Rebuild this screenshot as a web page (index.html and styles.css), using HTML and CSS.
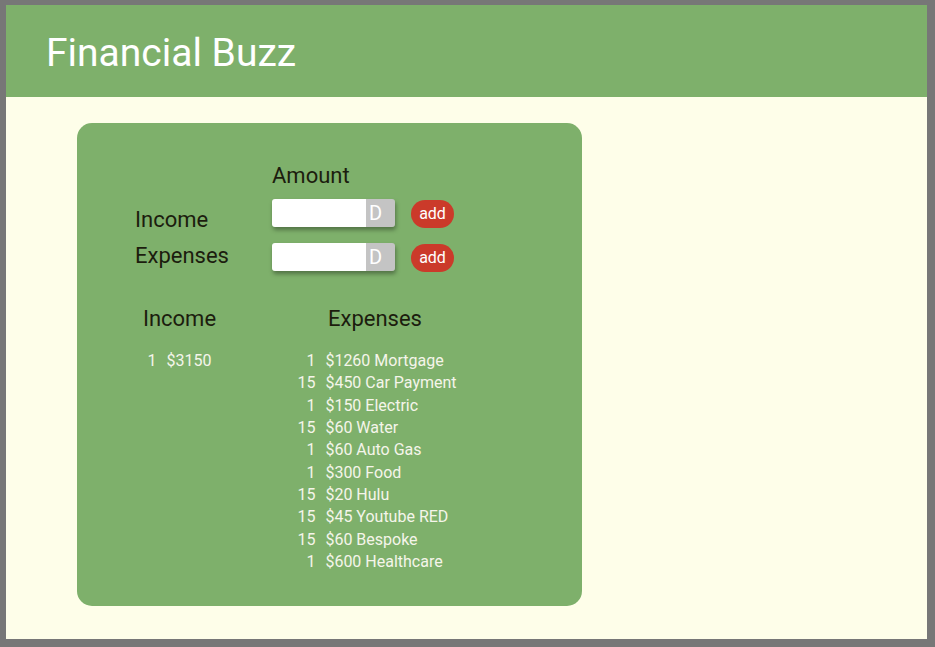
FILE: index.html
```html
<!DOCTYPE html>
<html>
<head>
<meta charset="utf-8">
<link rel="stylesheet" href="styles.css">
</head>
<body>
<div class="frame">
  <header class="topbar"><h1 class="title">Financial Buzz</h1></header>
  <main class="card">
    <section class="form">
      <div class="labels">
        <div class="label">Income</div>
        <div class="label">Expenses</div>
      </div>
      <div class="fields">
        <div class="amount-head">Amount</div>
        <div class="field"><span class="field-input"></span><span class="field-suffix">D</span></div>
        <div class="field"><span class="field-input"></span><span class="field-suffix">D</span></div>
      </div>
      <div class="buttons">
        <button class="add">add</button>
        <button class="add">add</button>
      </div>
    </section>
    <section class="lists">
      <div class="col col-income">
        <div class="col-head">Income</div>
        <div class="rows">
          <div class="row"><span class="day">1</span><span class="item">$3150</span></div>
        </div>
      </div>
      <div class="col col-expense">
        <div class="col-head">Expenses</div>
        <div class="rows">
          <div class="row"><span class="day">1</span><span class="item">$1260 Mortgage</span></div>
          <div class="row"><span class="day">15</span><span class="item">$450 Car Payment</span></div>
          <div class="row"><span class="day">1</span><span class="item">$150 Electric</span></div>
          <div class="row"><span class="day">15</span><span class="item">$60 Water</span></div>
          <div class="row"><span class="day">1</span><span class="item">$60 Auto Gas</span></div>
          <div class="row"><span class="day">1</span><span class="item">$300 Food</span></div>
          <div class="row"><span class="day">15</span><span class="item">$20 Hulu</span></div>
          <div class="row"><span class="day">15</span><span class="item">$45 Youtube RED</span></div>
          <div class="row"><span class="day">15</span><span class="item">$60 Bespoke</span></div>
          <div class="row"><span class="day">1</span><span class="item">$600 Healthcare</span></div>
        </div>
      </div>
    </section>
  </main>
</div>
</body>
</html>
```
FILE: styles.css
```css
html, body {
  margin: 0;
  padding: 0;
  background: #777777;
  font-family: Roboto, "Liberation Sans", sans-serif;
}
.frame {
  margin: 5px 8px 8px 6px;
  height: 634px;
  background: #fefee9;
  overflow: hidden;
}
.topbar {
  height: 92px;
  background: #7eb06b;
  display: flex;
  align-items: center;
  padding-left: 40px;
}
.title {
  margin: 3px 0 0 0;
  font-size: 39px;
  font-weight: 400;
  color: #ffffff;
  line-height: 46px;
}
.card {
  margin: 26px 0 0 71px;
  width: 505px;
  height: 483px;
  box-sizing: border-box;
  border-radius: 15px;
  background: #7eb06b;
  padding-top: 38px;
}
.form {
  display: flex;
  height: 112px;
  padding-left: 58px;
}
.labels {
  width: 137px;
  padding-top: 41px;
  flex-shrink: 0;
}
.label {
  font-size: 22px;
  line-height: 36px;
  color: #1c1d0e;
}
.fields {
  width: 123px;
  display: flex;
  flex-direction: column;
  gap: 16px;
  flex-shrink: 0;
}
.amount-head {
  font-size: 22px;
  line-height: 26px;
  height: 26px;
  padding-top: 2px;
  color: #1c1d0e;
  margin-bottom: -6.5px;
}
.field {
  display: flex;
  height: 28px;
  flex-shrink: 0;
  border-radius: 3px;
  overflow: hidden;
  box-shadow: 1px 3px 4px rgba(0, 0, 0, 0.35);
}
.field-input {
  flex: 1;
  background: #ffffff;
}
.field-suffix {
  width: 29px;
  background: #c4c4c4;
  color: #ffffff;
  font-size: 20px;
  line-height: 28px;
  text-align: left;
  padding-left: 3px;
  box-sizing: border-box;
}
.buttons {
  margin-left: 16px;
  padding-top: 38.5px;
  display: flex;
  flex-direction: column;
  gap: 16px;
  align-items: flex-start;
}
.add {
  height: 28px;
  width: 43px;
  border: none;
  border-radius: 14px;
  background: #cb3a2a;
  color: #ffffff;
  font-family: Roboto, "Liberation Sans", sans-serif;
  font-size: 16px;
  padding: 0;
  line-height: 28px;
}
.lists {
  display: flex;
  margin: 33px 0 0 44.5px;
  gap: 39.5px;
}
.col {
  display: flex;
  flex-direction: column;
  align-items: center;
}
.col-income { width: 116px; }
.col-expense { width: 200px; }
.col-head {
  font-size: 22px;
  line-height: 26px;
  color: #1c1d0e;
}
.col-expense .col-head {
  margin-right: 4px;
}
.rows {
  display: table;
  margin-top: 18px;
}
.row {
  display: table-row;
  font-size: 16px;
  line-height: 22.33px;
  color: #f5f5ea;
}
.day {
  display: table-cell;
  text-align: right;
  padding-right: 10px;
}
.item {
  display: table-cell;
  text-align: left;
  white-space: nowrap;
}
```
